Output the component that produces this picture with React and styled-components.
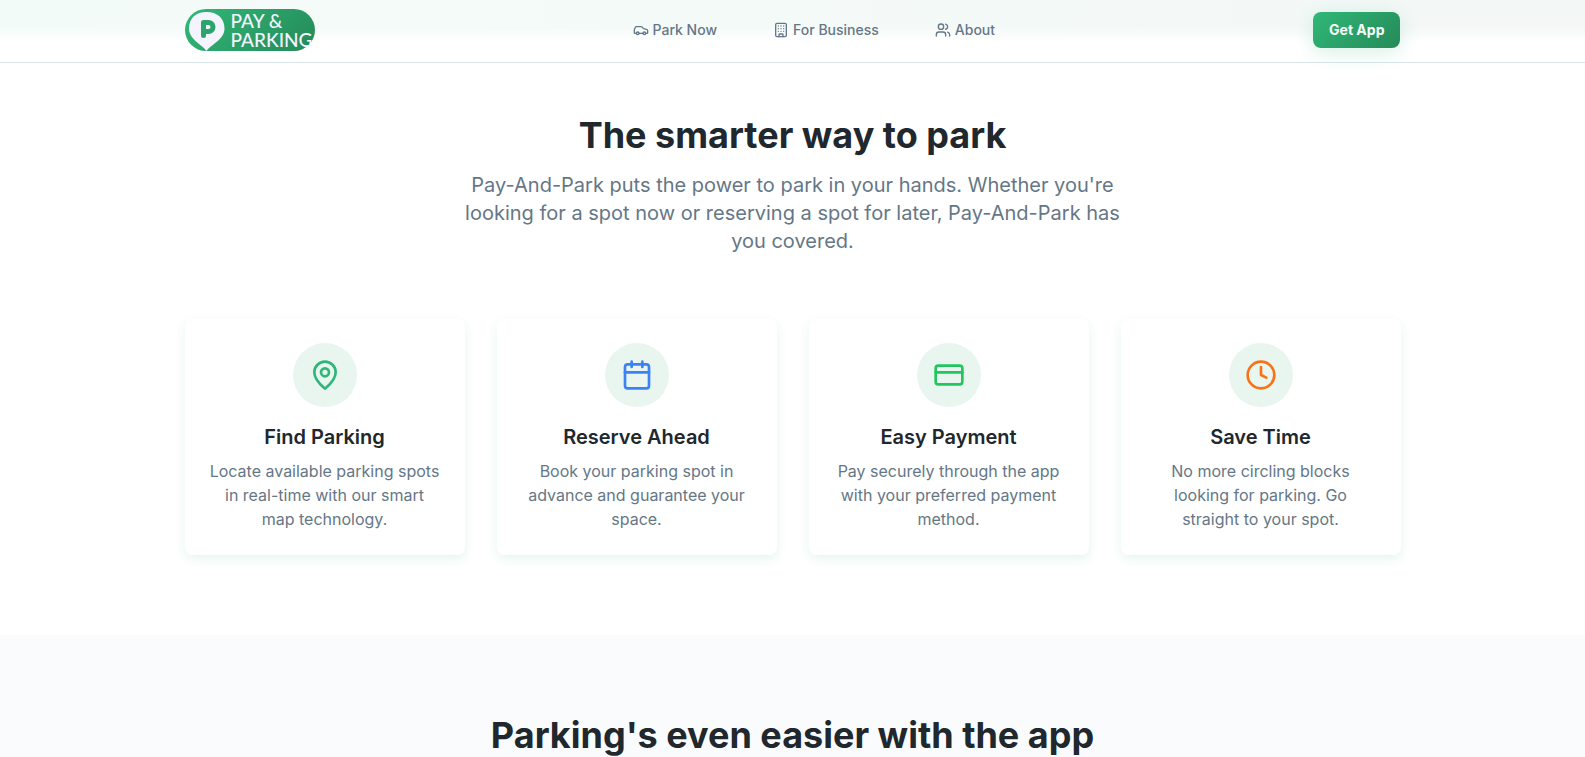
import React from "react";
import styled, { createGlobalStyle } from "styled-components";
import {
  Building,
  Calendar,
  Car,
  Clock,
  CreditCard,
  MapPin,
  Users
} from "lucide-react";

const GlobalStyle = createGlobalStyle`
  *,
  *::before,
  *::after {
    box-sizing: border-box;
  }

  body {
    margin: 0;
    background: #ffffff;
    color: #20272d;
    font-family: Inter, "Liberation Sans", sans-serif;
    font-size: 16px;
    line-height: 24px;
  }

  h2,
  h3,
  p {
    margin: 0;
  }
`;

const Container = styled.div`
  width: 100%;
  max-width: 1280px;
  margin: 0 auto;
  padding: 0 32px;
`;

const Header = styled.header`
  border-bottom: 1px solid #dae5ea;
  background: linear-gradient(
      to bottom,
      rgba(255, 255, 255, 0) 26px,
      #ffffff 42px
    ),
    linear-gradient(to right, #f3fbf8, #f4faf8 50%, #f3f7f6);
`;

const Bar = styled(Container)`
  display: flex;
  align-items: center;
  justify-content: space-between;
  padding-top: 9px;
  padding-bottom: 11px;
`;

const Logo = styled.a`
  display: flex;
  align-items: center;
  gap: 6px;
  width: 130px;
  height: 42px;
  padding-left: 4px;
  border-radius: 21px;
  background: linear-gradient(135deg, #30b878, #258a58);
  color: #f4f4ff;
  text-decoration: none;
  white-space: nowrap;
`;

const LogoText = styled.span`
  font-family: Lato, sans-serif;
  font-size: 19px;
  font-weight: 500;
  line-height: 19px;
`;

const Nav = styled.nav`
  display: flex;
  gap: 56px;
`;

const NavLink = styled.a`
  display: flex;
  align-items: center;
  gap: 4px;
  color: #657786;
  font-size: 14px;
  font-weight: 500;
  line-height: 20px;
  text-decoration: none;
`;

const AppButton = styled.button`
  height: 36px;
  padding: 0 16px;
  border: 0;
  border-radius: 8px;
  background: linear-gradient(135deg, #30b878, #258a58);
  box-shadow: 0 4px 20px rgba(46, 184, 119, 0.2);
  color: #f6fffa;
  font-family: inherit;
  font-size: 14px;
  font-weight: 700;
  line-height: 20px;
  cursor: pointer;
`;

const Features = styled.section`
  padding: 52px 0 80px;
`;

const Intro = styled.div`
  max-width: 672px;
  margin: 0 auto 64px;
  text-align: center;
`;

const Heading = styled.h2`
  font-size: 36px;
  font-weight: 700;
  line-height: 40px;
  text-align: center;
`;

const Lead = styled.p`
  margin-top: 16px;
  color: #657786;
  font-size: 20px;
  line-height: 28px;
`;

const CardGrid = styled.div`
  display: grid;
  grid-template-columns: repeat(4, 1fr);
  gap: 32px;

  @media (max-width: 1023px) {
    grid-template-columns: repeat(2, 1fr);
  }
`;

const Card = styled.article`
  display: flex;
  flex-direction: column;
  align-items: center;
  padding: 24px;
  border-radius: 8px;
  background: #ffffff;
  box-shadow: 0 4px 12px rgba(46, 184, 119, 0.12);
  text-align: center;
`;

const IconCircle = styled.div`
  display: flex;
  align-items: center;
  justify-content: center;
  width: 64px;
  height: 64px;
  margin-bottom: 16px;
  border-radius: 50%;
  background: #e9f6f0;
  color: ${(props) => props.$color};
`;

const CardTitle = styled.h3`
  margin-bottom: 8px;
  font-size: 20px;
  font-weight: 600;
  line-height: 28px;
`;

const CardText = styled.p`
  color: #657786;
`;

const AppSection = styled.section`
  padding: 80px 0;
  background: #f9fbfd;
`;

const features = [
  {
    title: "Find Parking",
    text:
      "Locate available parking spots in real-time with our smart map technology.",
    icon: MapPin,
    color: "#30b57a"
  },
  {
    title: "Reserve Ahead",
    text: "Book your parking spot in advance and guarantee your space.",
    icon: Calendar,
    color: "#3b82f6"
  },
  {
    title: "Easy Payment",
    text: "Pay securely through the app with your preferred payment method.",
    icon: CreditCard,
    color: "#22c55e"
  },
  {
    title: "Save Time",
    text: "No more circling blocks looking for parking. Go straight to your spot.",
    icon: Clock,
    color: "#f97316"
  }
];

const LogoPin = () => (
  <svg width="36" height="42" viewBox="0 0 36 42" aria-hidden="true">
    <path
      d="M17.500 42C14 36 0 31 0 19.500C0 9 7 3 17.500 3S35.500 9 35.500 19.500C35.500 31 21 36 17.500 42Z"
      fill="#f4f4ff"
    />
    <path
      d="M14.500 26.500V13.500h5a4 4 0 0 1 0 9h-5"
      fill="none"
      stroke="#2ba56b"
      strokeWidth="5"
      strokeLinecap="round"
      strokeLinejoin="round"
    />
  </svg>
);

const App = () => {
  return (
    <>
      <GlobalStyle />
      <Header>
        <Bar>
          <Logo href="#home">
            <LogoPin />
            <LogoText>
              PAY &amp;
              <br />
              PARKING
            </LogoText>
          </Logo>
          <Nav>
            <NavLink href="#park">
              <Car size={16} /> Park Now
            </NavLink>
            <NavLink href="#business">
              <Building size={16} /> For Business
            </NavLink>
            <NavLink href="#about">
              <Users size={16} /> About
            </NavLink>
          </Nav>
          <AppButton type="button">Get App</AppButton>
        </Bar>
      </Header>
      <main>
        <Features>
          <Container>
            <Intro>
              <Heading>The smarter way to park</Heading>
              <Lead>
                Pay-And-Park puts the power to park in your hands. Whether
                you're looking for a spot now or reserving a spot for later,
                Pay-And-Park has you covered.
              </Lead>
            </Intro>
            <CardGrid>
              {features.map(({ title, text, icon: Icon, color }) => (
                <Card key={title}>
                  <IconCircle $color={color}>
                    <Icon size={32} />
                  </IconCircle>
                  <CardTitle>{title}</CardTitle>
                  <CardText>{text}</CardText>
                </Card>
              ))}
            </CardGrid>
          </Container>
        </Features>
        <AppSection>
          <Container>
            <Heading>Parking's even easier with the app</Heading>
          </Container>
        </AppSection>
      </main>
    </>
  );
};

export default App;
